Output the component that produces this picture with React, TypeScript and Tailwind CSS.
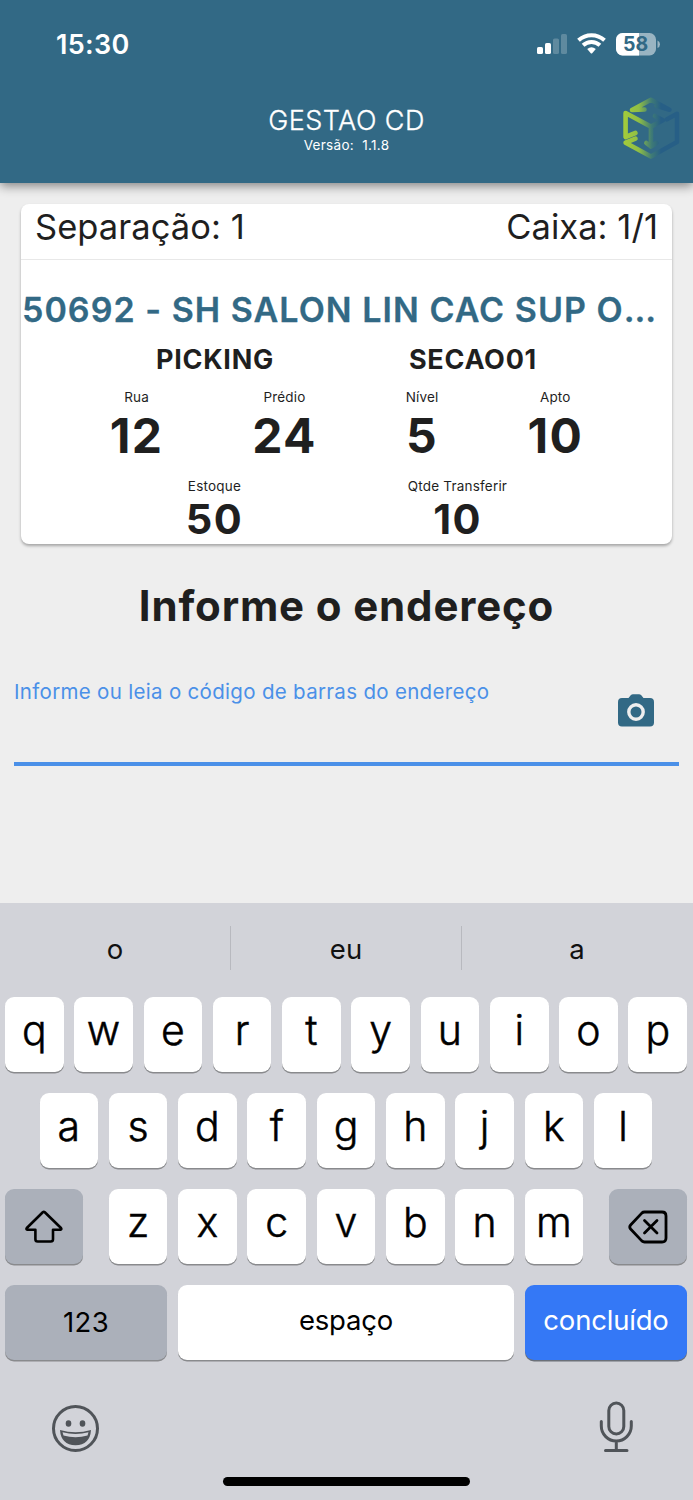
import React from "react";

const position = [
  { label: "Rua", value: "12" },
  { label: "Prédio", value: "24" },
  { label: "Nível", value: "5" },
  { label: "Apto", value: "10" },
];

const amounts = [
  { label: "Estoque", value: "50" },
  { label: "Qtde Transferir", value: "10" },
];

const suggestions = ["o", "eu", "a"];

const StatusIcons = () => (
  <svg className="w-[124px] h-[24px]" viewBox="0 0 124 24" fill="none">
    <rect x="1" y="15" width="6" height="7" rx="1.6" fill="#fff" />
    <rect x="9" y="11" width="6" height="11" rx="1.6" fill="#fff" />
    <rect x="17" y="6.500" width="6" height="15.500" rx="1.6" fill="#fff" fillOpacity=".22" />
    <rect x="25" y="2" width="6" height="20" rx="1.6" fill="#fff" fillOpacity=".22" />
    <g stroke="#fff" strokeWidth="4">
      <path d="M42.500 8.200a19.200 19.200 0 0 1 26 0" />
      <path d="M47.100 13.200a12.400 12.400 0 0 1 16.800 0" />
    </g>
    <path d="M51.200 17a6.800 6.800 0 0 1 8.600 0l-3.600 4.200q-.7.700-1.400 0z" fill="#fff" />
    <rect x="80" y="1" width="40" height="22.500" rx="6.500" fill="#fff" fillOpacity=".5" />
    <path d="M86.500 1H103v22.500H86.500A6.500 6.500 0 0 1 80 17V7.500A6.500 6.500 0 0 1 86.500 1z" fill="#fff" />
    <path d="M121.500 8.500q2.500 1 2.500 3.700t-2.500 3.700z" fill="#fff" fillOpacity=".5" />
    <text x="99.500" y="19" textAnchor="middle" fontSize="19.500" fontWeight="700" fill="#326985">
      58
    </text>
  </svg>
);

const Logo = () => (
  <svg className="w-[60px] h-[64px]" viewBox="0 0 60 64" fill="none">
    <defs>
      <linearGradient id="cube" x1="3" y1="0" x2="40" y2="0" gradientUnits="userSpaceOnUse">
        <stop offset="0" stopColor="#a3cb3b" />
        <stop offset=".4" stopColor="#8fbe45" />
        <stop offset=".75" stopColor="#3e7a76" />
        <stop offset="1" stopColor="#275f86" />
      </linearGradient>
    </defs>
    <g stroke="url(#cube)" strokeWidth="4.600" strokeLinecap="round" strokeLinejoin="round">
      <path d="M23.500 13.500 11 14 30 3.800 48.500 13.700 35.500 9.700" />
      <path d="M14.500 37 4.600 41V17L30 30.600V50.500L25.400 47M30 50.500 35.400 47" />
      <path d="M30 30.600 42 24.300 34 20" />
      <path d="M14.500 42.700 4.600 46.700 30 60.500 56 46V17.700L46 23.300" />
    </g>
  </svg>
);

const Key = ({ children }: { children: React.ReactNode }) => (
  <div className="w-[58.600px] h-[75px] shrink-0 rounded-[9px] bg-white shadow-[0_1.500px_0_#898a8d] flex items-center justify-center text-[41px] leading-none font-light [-webkit-text-stroke:0.500px_black] text-black pb-[8px]">
    {children}
  </div>
);

const KeyRow = ({ keys }: { keys: string }) => (
  <div className="flex gap-[10.700px]">
    {keys.split("").map((k) => (
      <Key key={k}>{k}</Key>
    ))}
  </div>
);

const Field = ({ label, value, big }: { label: string; value: string; big?: boolean }) => (
  <div className="flex flex-col items-center">
    <span className="text-[13.500px] leading-[18px] tracking-[0.200px]">{label}</span>
    <span
      className={
        big
          ? "mt-[1px] text-[48px] leading-[57px] font-bold tracking-[1.300px]"
          : "text-[41.500px] leading-[48px] font-bold tracking-[1.300px]"
      }
    >
      {value}
    </span>
  </div>
);

const Keyboard = () => (
  <div className="h-[597px] bg-[#d2d3d9] flex flex-col">
    <div className="h-[94px] pr-[1px] flex items-center">
      {suggestions.map((s, i) => (
        <div
          key={s}
          className={
            "flex-1 h-[44px] mb-[4px] pt-[3px] flex items-center justify-center text-[27.500px] text-[#111] " +
            (i < 2 ? "border-r border-[#b8b9bf]" : "")
          }
        >
          {s}
        </div>
      ))}
    </div>
    <div className="flex flex-col gap-[21px] items-center pr-[1px]">
      <KeyRow keys="qwertyuiop" />
      <KeyRow keys="asdfghjkl" />
      <div className="w-[682px] flex justify-between">
        <div className="w-[78px] h-[75px] rounded-[9px] bg-[#abb0ba] shadow-[0_1.500px_0_#898a8d] flex items-center justify-center">
          <svg className="w-[40px] h-[36px]" viewBox="0 0 40 36" fill="none" stroke="#000" strokeWidth="2.600" strokeLinejoin="round">
            <path d="M18.800 3.200q1-.9 2 0L37 19q1 1.400-.6 1.700H29V30.200q0 2.300-2.300 2.300H13.700q-2.300 0-2.300-2.300V20.700H3.400Q1.800 20.400 2.800 19z" />
          </svg>
        </div>
        <KeyRow keys="zxcvbnm" />
        <div className="w-[78px] h-[75px] rounded-[9px] bg-[#abb0ba] shadow-[0_1.500px_0_#898a8d] flex items-center justify-center">
          <svg className="w-[40px] h-[34px]" viewBox="0 0 40 34" fill="none" stroke="#000" strokeWidth="2.800" strokeLinecap="round" strokeLinejoin="round">
            <path d="M16.500 2H34q4 0 4 4V28q0 4-4 4H16.500q-1.500 0-2.700-1.100L2.600 19q-1.700-2 0-4L13.800 3.100Q15 2 16.500 2z" />
            <path d="M16.500 10.500 29 23M29 10.500 16.500 23" />
          </svg>
        </div>
      </div>
      <div className="w-[682px] flex justify-between text-[27.500px] text-black">
        <div className="w-[162px] h-[75px] rounded-[9px] bg-[#abb0ba] shadow-[0_1.500px_0_#898a8d] flex items-center justify-center">
          <span className="tracking-[0.300px]">123</span>
        </div>
        <div className="w-[336px] h-[75px] rounded-[9px] bg-white shadow-[0_1.500px_0_#898a8d] flex items-center justify-center pb-[4px]">
          <span className="tracking-[-0.200px]">espaço</span>
        </div>
        <div className="w-[162px] h-[75px] rounded-[9px] bg-[#3478f6] shadow-[0_1.500px_0_#6b7079] flex items-center justify-center pb-[4px] text-white">
          <span className="tracking-[-0.200px]">concluído</span>
        </div>
      </div>
    </div>
    <div className="mt-[41px] px-[51px] flex justify-between items-start">
      <svg className="w-[49px] h-[50px] mt-[3px]" viewBox="0 0 49 50" fill="none">
        <circle cx="24.500" cy="24.500" r="22" stroke="#505459" strokeWidth="3" />
        <ellipse cx="17.500" cy="19.500" rx="2.800" ry="3.300" fill="#505459" />
        <ellipse cx="31.500" cy="19.500" rx="2.800" ry="3.300" fill="#505459" />
        <path d="M9 26Q24.500 30.500 40 26 39 41 24.500 41.200 10 41 9 26z" fill="#505459" />
        <path d="M11.500 28.300Q24.500 31.800 37.500 28.300L36.500 31.600Q24.500 35 12.500 31.600z" fill="#d2d3d9" />
      </svg>
      <svg className="w-[35px] h-[52px] mr-[8px]" viewBox="0 0 35 52" fill="none" stroke="#505459" strokeWidth="3" strokeLinecap="round">
        <rect x="9.800" y="2" width="15" height="31" rx="7.500" />
        <path d="M2.300 20.500V25a15 15 0 0 0 30 0V20.500M17.300 40.500V49M6.500 49.500H28" />
      </svg>
    </div>
    <div className="mt-[23px] mx-auto w-[247px] h-[9px] rounded-full bg-black" />
  </div>
);

const App = () => {
  return (
    <div className="w-[693px] h-[1500px] overflow-hidden bg-[#eee] text-[#1f1f1f] font-['Inter',sans-serif] flex flex-col">
      <header className="h-[183px] shrink-0 bg-[#326985] text-white shadow-[0_3px_10px_rgba(0,0,0,0.45)]">
        <div className="h-[88px] pl-[56px] pr-[33px] flex items-center justify-between">
          <span className="pt-[2px] text-[27px] font-semibold tracking-[0.300px]">15:30</span>
          <StatusIcons />
        </div>
        <div className="relative flex flex-col items-center pt-[16px]">
          <h1 className="pt-[1px] text-[27px] leading-[31px] font-light tracking-[0.450px] [-webkit-text-stroke:0.300px_white]">GESTAO CD</h1>
          <p className="text-[13.500px] leading-[18px] tracking-[0.300px] whitespace-pre">Versão:  1.1.8</p>
          <div className="absolute right-[12px] top-[8px]">
            <Logo />
          </div>
        </div>
      </header>

      <main className="grow">
        <section className="mt-[21px] mx-[21px] h-[340px] rounded-[8px] bg-white shadow-[0_2px_3px_rgba(0,0,0,0.3)]">
          <div className="h-[56px] px-[14px] pt-[2px] border-b border-[#e8e8e8] flex justify-between text-[34.500px] leading-[41px] tracking-[0.050px]">
            <span>Separação: 1</span>
            <span>Caixa: 1/1</span>
          </div>
          <h2 className="pt-[29px] pl-[1px] text-[34px] leading-[41px] font-semibold tracking-[1.030px] text-[#326985] whitespace-nowrap [-webkit-text-stroke:0.300px_#326985]">
            50692 - SH SALON LIN CAC SUP O<span className="tracking-[0px]">...</span>
          </h2>
          <div className="mt-[13px] flex justify-evenly text-[27px] leading-[34px] font-bold tracking-[0.700px]">
            <span>PICKING</span>
            <span>SECAO01</span>
          </div>
          <div className="mt-[11px] flex justify-evenly">
            {position.map((p) => (
              <Field key={p.label} {...p} big />
            ))}
          </div>
          <div className="mt-[13px] flex justify-evenly">
            {amounts.map((a) => (
              <Field key={a.label} {...a} />
            ))}
          </div>
        </section>

        <h3 className="mt-[36px] text-center text-[42px] leading-[52px] font-bold tracking-[0.850px]">Informe o endereço</h3>

        <div className="mt-[46px] mx-[14px] h-[88px] border-b-[4px] border-[#4a90e8] flex justify-between">
          <label className="text-[20.500px] leading-[27px] tracking-[0.310px] text-[#4a90e8]">
            Informe ou leia o código de barras do endereço
          </label>
          <svg className="mt-[16px] mr-[25px] w-[36px] h-[33px]" viewBox="0 0 36 33">
            <path d="M4 4h6.500l2.200-2.800Q13.700.2 15 .2h6q1.300 0 2.300 1L25.500 4H32q4 0 4 4v20.500q0 4-4 4H4q-4 0-4-4V8Q0 4 4 4z" fill="#326985" />
            <circle cx="18" cy="18" r="7.200" fill="none" stroke="#eee" strokeWidth="3.400" />
          </svg>
        </div>
      </main>

      <Keyboard />
    </div>
  );
};

export default App;
